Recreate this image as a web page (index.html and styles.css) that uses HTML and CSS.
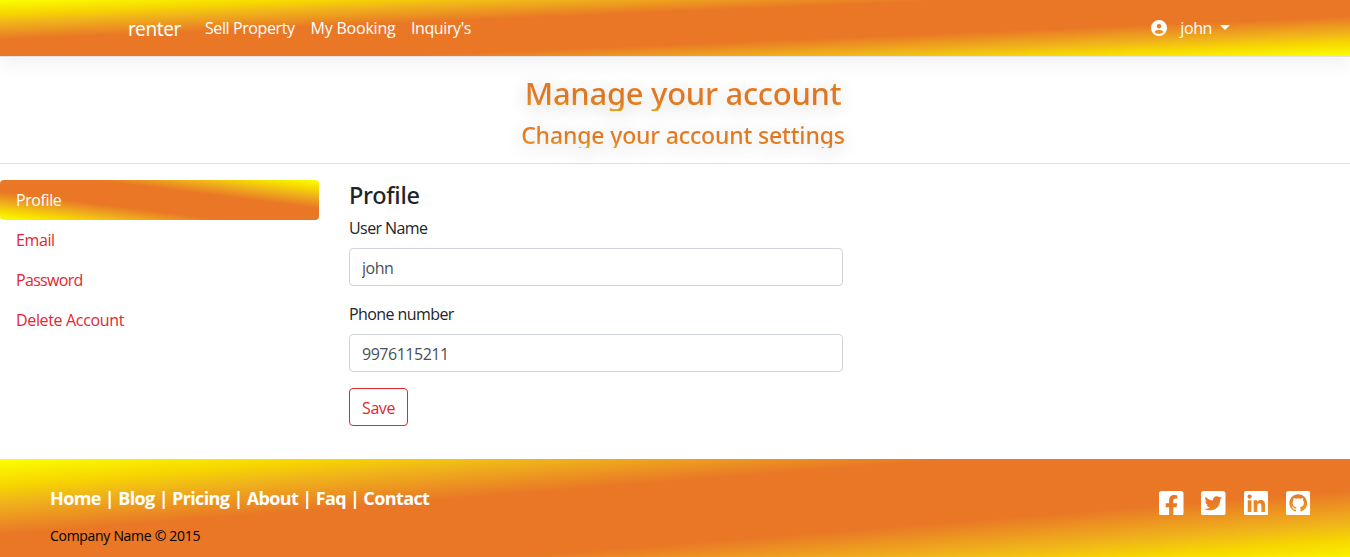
FILE: index.html
```html
<!DOCTYPE html>
<html lang="en">
<head>
<meta charset="utf-8">
<title>Manage your account</title>
<link rel="stylesheet" href="styles.css">
</head>
<body>
<nav class="navbar">
  <a class="brand">renter</a>
  <div class="nav-links">
    <a class="n-sell">Sell Property</a>
    <a class="n-book">My Booking</a>
    <a class="n-inq">Inquiry's</a>
  </div>
  <div class="user">
    <svg class="user-icon" viewBox="0 0 512 512"><path fill="#fff" d="M399 384.2C376.9 345.8 335.4 320 288 320H224c-47.4 0-88.9 25.8-111 64.2c35.2 39.2 86.2 63.8 143 63.8s107.8-24.7 143-63.8zM0 256a256 256 0 1 1 512 0A256 256 0 1 1 0 256zm256 16a72 72 0 1 0 0-144 72 72 0 1 0 0 144z" fill-rule="evenodd"/></svg>
    <span class="user-name">john</span>
    <span class="caret"></span>
  </div>
</nav>
<header class="page-head">
  <h2 class="title">Manage your account</h2>
  <h4 class="subtitle">Change your account settings</h4>
</header>
<main class="content">
  <aside class="pills">
    <a class="pill active">Profile</a>
    <a class="pill">Email</a>
    <a class="pill p-pass">Password</a>
    <a class="pill p-delete">Delete Account</a>
  </aside>
  <form class="form">
    <h4 class="form-title">Profile</h4>
    <div class="group">
      <label class="label">User Name</label>
      <input class="control" type="text" value="john">
    </div>
    <div class="group">
      <label class="label">Phone number</label>
      <input class="control" type="text" value="9976115211">
    </div>
    <button class="save" type="button">Save</button>
  </form>
</main>
<footer class="footer">
  <div>
    <p class="foot-links">Home | Blog | Pricing | About | Faq | Contact</p>
    <p class="company">Company Name © 2015</p>
  </div>
  <div class="social">
    <svg viewBox="0 32 448 448"><path d="M400 32H48A48 48 0 0 0 0 80v352a48 48 0 0 0 48 48h137.25V327.69h-63V256h63v-54.64c0-62.15 37-96.48 93.67-96.48 27.14 0 55.52 4.84 55.52 4.84v61h-31.27c-30.81 0-40.42 19.12-40.42 38.73V256h68.78l-11 71.69h-57.78V480H400a48 48 0 0 0 48-48V80a48 48 0 0 0-48-48z"/></svg>
    <svg viewBox="0 32 448 448"><path d="M400 32H48C21.5 32 0 53.5 0 80v352c0 26.5 21.5 48 48 48h352c26.5 0 48-21.5 48-48V80c0-26.5-21.5-48-48-48zm-48.9 158.8c.2 2.8.2 5.7.2 8.5 0 86.7-66 186.6-186.6 186.6-37.2 0-71.7-10.8-100.7-29.4 5.3.6 10.4.8 15.8.8 30.7 0 58.9-10.4 81.4-28-28.8-.6-53-19.5-61.3-45.5 10.1 1.5 19.2 1.5 29.6-1.2-30-6.1-52.5-32.5-52.5-64.4v-.8c8.7 4.9 18.9 7.9 29.6 8.3a65.447 65.447 0 0 1-29.2-54.6c0-12.2 3.2-23.4 8.9-33.1 32.3 39.8 80.8 65.8 135.2 68.6-9.3-44.5 24-80.6 64-80.6 18.9 0 35.9 7.9 47.9 20.7 14.8-2.8 29-8.3 41.6-15.8-4.9 15.2-15.2 28-28.8 36.1 13.2-1.4 26-5.1 37.8-10.2-8.9 13.1-20.1 24.7-32.9 34z"/></svg>
    <svg viewBox="0 32 448 448"><path d="M416 32H31.9C14.3 32 0 46.5 0 64.3v383.4C0 465.5 14.3 480 31.9 480H416c17.6 0 32-14.5 32-32.3V64.3c0-17.8-14.4-32.3-32-32.3zM135.4 416H69V202.2h66.5V416zm-33.2-243c-21.3 0-38.5-17.3-38.5-38.5S80.9 96 102.2 96c21.2 0 38.5 17.3 38.5 38.5 0 21.3-17.2 38.5-38.5 38.5zm282.1 243h-66.4V312c0-24.8-.5-56.7-34.5-56.7-34.6 0-39.9 27-39.9 54.9V416h-66.4V202.2h63.7v29.2h.9c8.9-16.8 30.6-34.5 62.9-34.5 67.2 0 79.7 44.3 79.7 101.9V416z"/></svg>
    <svg viewBox="0 32 448 448">
      <mask id="cat" maskUnits="userSpaceOnUse" x="0" y="32" width="448" height="448">
        <rect y="32" width="448" height="448" fill="#fff"/>
        <path transform="translate(62 92) scale(20.2)" fill="#000" d="M8 0C3.58 0 0 3.58 0 8c0 3.54 2.29 6.53 5.47 7.59.4.07.55-.17.55-.38 0-.19-.01-.82-.01-1.49-2.01.37-2.53-.49-2.69-.94-.09-.23-.48-.94-.82-1.13-.28-.15-.68-.52-.01-.53.63-.01 1.08.58 1.23.82.72 1.21 1.87.87 2.33.66.07-.52.28-.87.51-1.07-1.78-.2-3.64-.89-3.64-3.95 0-.87.31-1.59.82-2.15-.08-.2-.36-1.02.08-2.12 0 0 .67-.21 2.2.82.64-.18 1.32-.27 2-.27.68 0 1.36.09 2 .27 1.53-1.04 2.2-.82 2.2-.82.44 1.1.16 1.92.08 2.12.51.56.82 1.27.82 2.15 0 3.07-1.87 3.75-3.65 3.95.29.25.54.73.54 1.48 0 1.07-.01 1.93-.01 2.2 0 .21.15.46.55.38A8.013 8.013 0 0016 8c0-4.42-3.58-8-8-8z"/>
      </mask>
      <rect y="32" width="448" height="448" rx="48" mask="url(#cat)"/>
    </svg>
  </div>
</footer>
</body>
</html>
```
FILE: styles.css
```css
:root {
  --stops: #fbff00 0%, #f7d700 12%, #f0b51a 20%, #e97726 35.5%, #e97726 64.5%, #f0b51a 80%, #f7d700 88%, #fbff00 100%;
}
* { box-sizing: border-box; }
html, body { height: 100%; overflow: hidden; }
body {
  margin: 0;
  background: #fff;
  color: #212529;
  font: 400 16px/24px "Open Sans", "Noto Sans", sans-serif;
  letter-spacing: -0.4px;
}
h2, h4, p { margin: 0; }

.navbar {
  display: flex;
  align-items: center;
  height: 57px;
  padding: 0 120px 0 128px;
  border-bottom: 1px solid #dee2e6;
  background: linear-gradient(to right bottom, var(--stops)) padding-box;
  box-shadow: 0 8px 16px rgba(0, 0, 0, .05);
  color: #fff;
  white-space: nowrap;
}
.brand { width: 77px; padding-top: 2px; font: 400 19px/24px "Noto Sans", sans-serif; letter-spacing: -0.4px; }
.nav-links { display: flex; gap: 16px; }
.n-sell { width: 89.5px; }
.n-book { width: 84.5px; letter-spacing: -0.21px; }
.user { display: flex; align-items: center; margin-left: auto; }
.user-icon { width: 16px; height: 16px; margin-right: 13px; }
.caret {
  margin: -2px 0 0 8px;
  border: 5px solid transparent;
  border-top-color: #fff;
  border-bottom: 0;
}

.page-head {
  height: 107px;
  padding: 16px 0 0 16px;
  border-bottom: 1px solid #e0e0e0;
  text-align: center;
}
.title, .subtitle {
  background: linear-gradient(to right top, #fbff00 0%, #f7d700 12%, #f0aa1c 22%, #ec8c22 31%, #e97c24 42%, #e97c24 60%, #ee9a20 72%, #f7d700 88%, #fbff00 100%);
  -webkit-background-clip: text;
  background-clip: text;
  color: transparent;
  font-family: "Noto Sans", sans-serif;
  font-weight: 500;
  text-shadow: 0 4px 20px rgba(0, 0, 0, .2);
}
.title { height: 38px; margin-bottom: 8px; font-size: 31px; line-height: 41px; letter-spacing: -0.3px; }
.subtitle { height: 29px; font-size: 23px; line-height: 32px; letter-spacing: -0.15px; }

.content { display: flex; gap: 30px; height: 295px; padding-top: 16px; }
.pills { width: 319px; }
.pill { display: block; height: 40px; padding: 8px 16px; color: #e3262f; }
.p-pass { letter-spacing: -0.68px; }
.p-delete { letter-spacing: -0.34px; }
.active {
  border-radius: 4px;
  background: linear-gradient(to right top, var(--stops));
  color: #fff;
}

.form { width: 494px; }
.form-title { height: 28px; margin-bottom: 8px; font: 500 23.5px/30px "Noto Sans", sans-serif; letter-spacing: -0.3px; }
.group { height: 86px; }
.label { display: block; height: 32px; letter-spacing: -0.58px; }
.control {
  display: block;
  width: 100%;
  height: 38px;
  padding: 8px 12px 6px;
  border: 1px solid #ced4da;
  border-radius: 4px;
  color: #495057;
  font: inherit;
  letter-spacing: -0.48px;
}
.save {
  width: 59px;
  height: 38px;
  padding: 1px 0 0;
  border: 1px solid #e3262f;
  border-radius: 4px;
  background: transparent;
  color: #e3262f;
  font: inherit;
  letter-spacing: -0.45px;
}

.footer {
  display: flex;
  justify-content: space-between;
  height: 107px;
  padding: 26px 39.5px 0 50px;
  background: linear-gradient(to right bottom, var(--stops));
}
.foot-links { height: 39px; color: #fff; font-size: 18px; font-weight: 700; letter-spacing: -0.62px; line-height: 27px; }
.company { color: #000; font-size: 14px; letter-spacing: -0.3px; }
.social { display: flex; gap: 17.8px; padding-top: 5.5px; }
.social svg { width: 24.5px; height: 24.5px; fill: #fff; }
```
